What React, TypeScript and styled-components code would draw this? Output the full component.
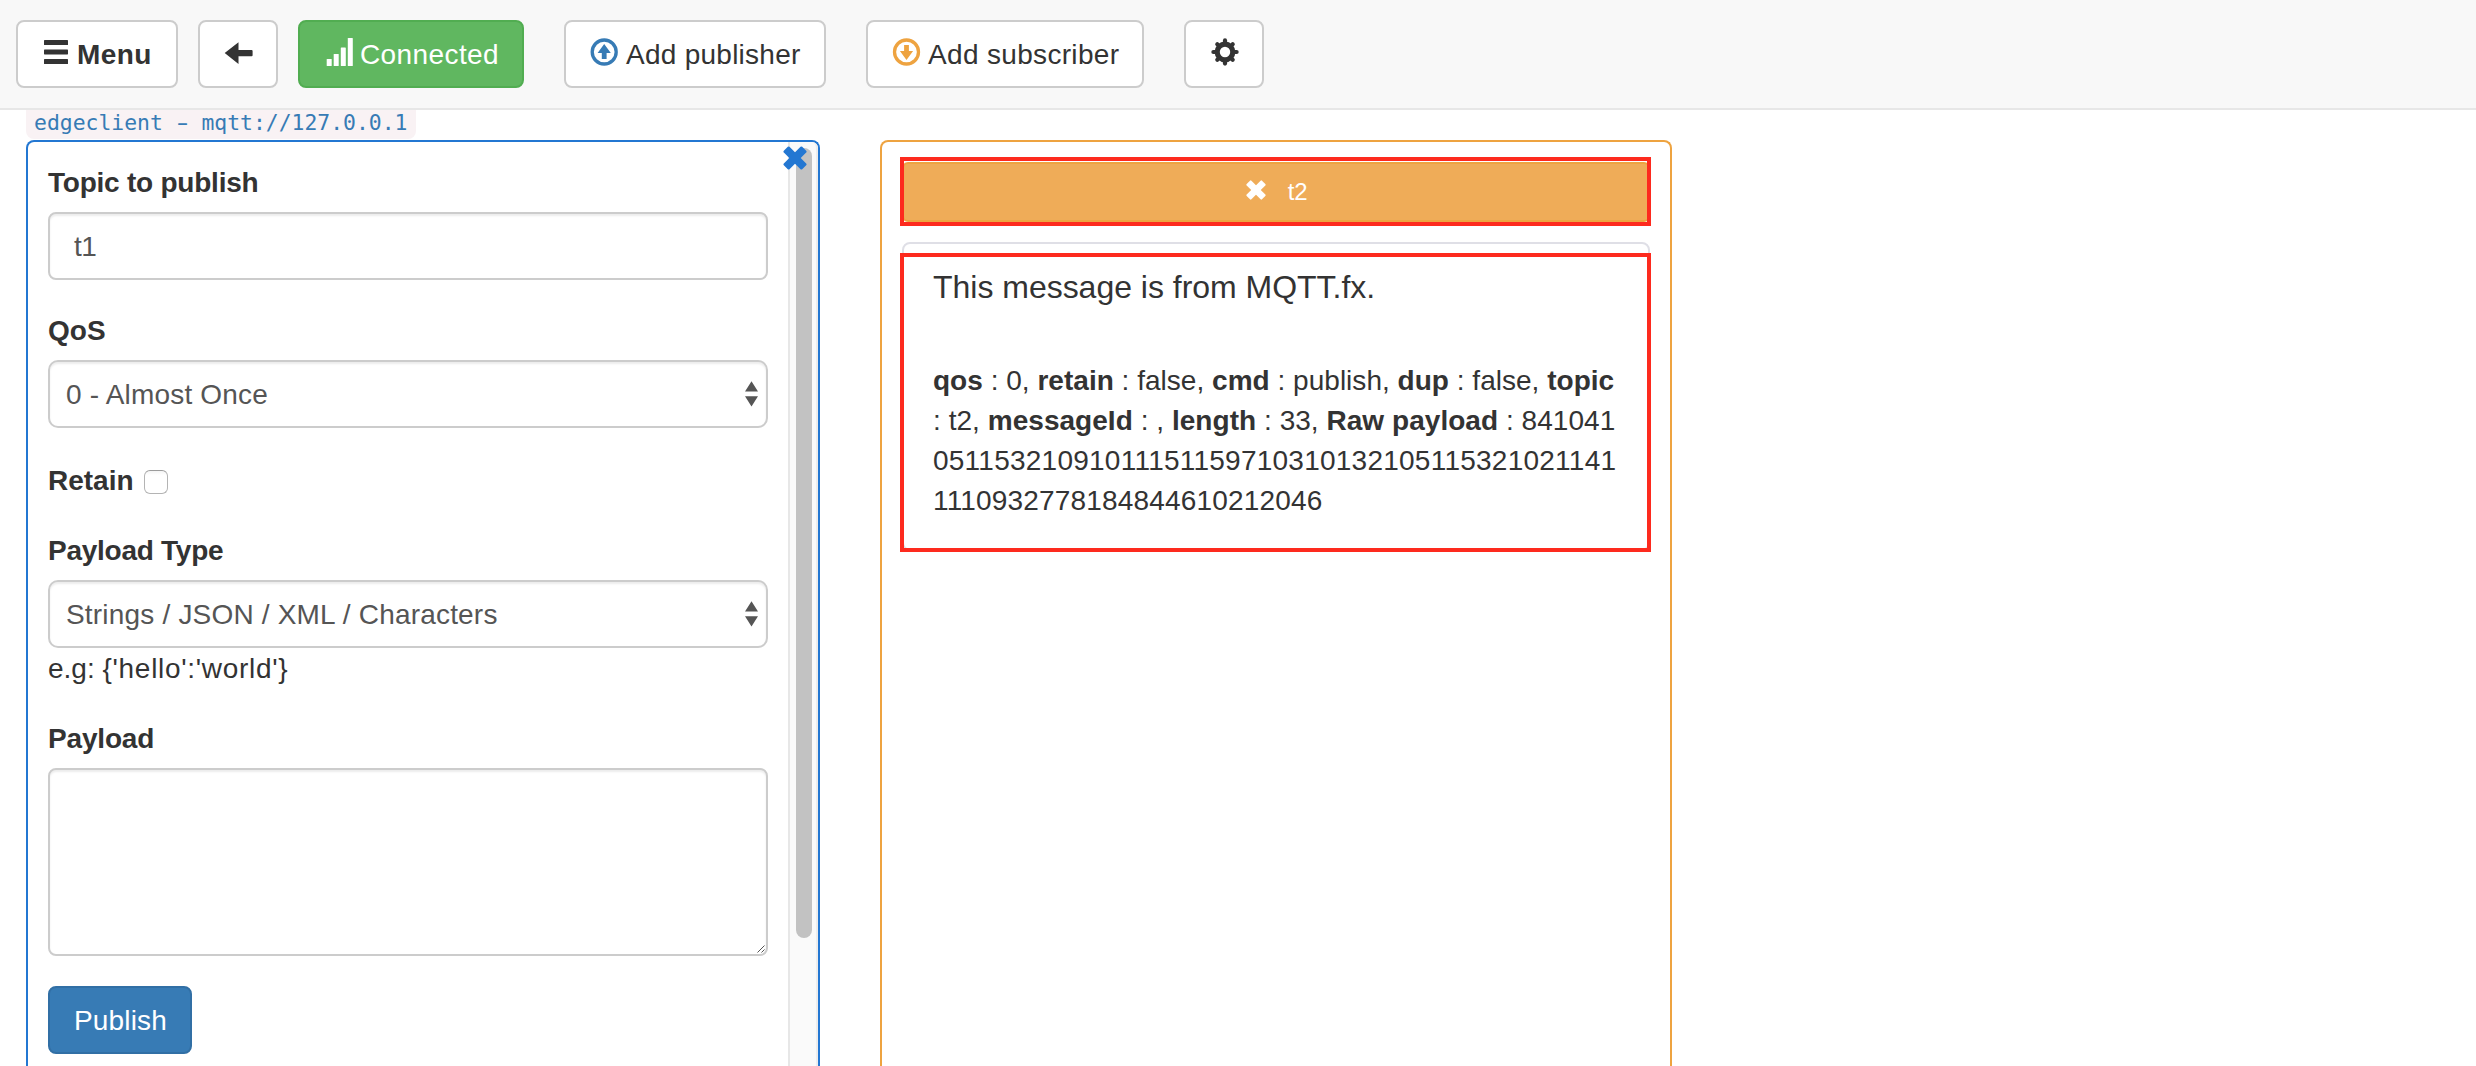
import React from "react";
import styled, { createGlobalStyle } from "styled-components";

const GlobalStyle = createGlobalStyle`
  *, *::before, *::after { box-sizing: border-box; }
  body {
    margin: 0;
    overflow: hidden;
    background: #fff;
    color: #333;
    font: 28px/40px "Helvetica Neue", "Liberation Sans", Arial, sans-serif;
  }
`;

const Page = styled.div`
  display: flex;
  flex-direction: column;
  width: 2476px;
  height: 1066px;
  overflow: hidden;
`;

/* ---------- toolbar ---------- */

const Navbar = styled.header`
  flex: none;
  display: flex;
  align-items: flex-start;
  height: 110px;
  padding: 20px 16px 0;
  background: #f8f8f8;
  border-bottom: 2px solid #e7e7e7;
`;

const ButtonGroup = styled.div`
  display: flex;
  gap: 20px;
  margin-right: 40px;
`;

type Tone = "default" | "success" | "primary";
const tones: Record<Tone, [string, string, string]> = {
  default: ["#fff", "#ccc", "#333"],
  success: ["#60b760", "#51ad51", "#fff"],
  primary: ["#377bb5", "#316fa5", "#fff"],
};

const Button = styled.button<{ $width: number; $tone?: Tone; $bold?: boolean; $track?: number }>`
  display: flex;
  flex: none;
  width: ${(p) => p.$width}px;
  height: 68px;
  margin: 0;
  padding: 13px 24px 11px;
  border: 2px solid ${(p) => tones[p.$tone ?? "default"][1]};
  border-radius: 8px;
  background: ${(p) => tones[p.$tone ?? "default"][0]};
  color: ${(p) => tones[p.$tone ?? "default"][2]};
  font: inherit;
  font-weight: ${(p) => (p.$bold ? 700 : 400)};
  letter-spacing: ${(p) => p.$track ?? 0}px;
  white-space: nowrap;
`;

const Icon = styled.svg<{ $color?: string; $gap?: number }>`
  flex: none;
  width: 28px;
  height: 28px;
  margin: 3px ${(p) => p.$gap ?? 8}px 0 0;
  overflow: visible;
  fill: currentColor;
  color: ${(p) => p.$color ?? "inherit"};
`;

const MenuIcon = () => (
  <Icon viewBox="0 0 28 28" $gap={7}>
    <rect x="2" y="2" width="24" height="5" rx=".6" />
    <rect x="2" y="11.6" width="24" height="4.8" rx=".6" />
    <rect x="2" y="21" width="24" height="5" rx=".6" />
  </Icon>
);

const BackIcon = () => (
  <Icon viewBox="0 0 28 28" $gap={0}>
    <path d="M.7 15 L14.5 4.2 V12 H27.6 Q28.6 12 28.6 13 V17.3 Q28.6 18.2 27.6 18.2 H14.5 V26 Z" />
  </Icon>
);

const SignalIcon = () => (
  <Icon viewBox="0 0 28 28">
    <rect x="2.7" y="21" width="5" height="7" rx=".6" />
    <rect x="9.7" y="16" width="5" height="12" rx=".6" />
    <rect x="16.8" y="9.5" width="5" height="18.5" rx=".6" />
    <rect x="23.8" y="0" width="5" height="28" rx=".6" />
  </Icon>
);

const CircleArrow = ({ color, down }: { color: string; down?: boolean }) => (
  <Icon viewBox="0 0 28 28" $color={color}>
    <g transform={down ? "translate(.3 0)" : "matrix(1 0 0 -1 0 28)"}>
      <circle cx="14.2" cy="14" r="12" fill="none" stroke="currentColor" strokeWidth="3.3" />
      <path d="M11.8 7 h4.8 v6 h4.2 L14.2 22 L7.6 13 h4.2 z" />
    </g>
  </Icon>
);

const GearIcon = () => (
  <Icon viewBox="0 0 28 28" $gap={0}>
    <g transform="translate(15 14)" fill="none" stroke="currentColor">
      <circle r="7.8" strokeWidth="5.2" />
      {[0, 45, 90, 135, 180, 225, 270, 315].map((a) => (
        <path key={a} transform={`rotate(${a})`} d={a % 90 ? "M0 -9 V-10.9" : "M0 -9 V-11.6"} strokeWidth="4.2" strokeLinecap="round" />
      ))}
    </g>
  </Icon>
);

/* ---------- connection line ---------- */

const ConnectionRow = styled.div`
  flex: none;
  height: 30px;
  padding-left: 26px;
`;

const ConnectionTag = styled.code`
  display: block;
  width: 390px;
  height: 29px;
  padding-left: 8px;
  border-radius: 0 0 8px 8px;
  background: #f9f2f4;
  color: #377bb5;
  font: 21.4px/25px "DejaVu Sans Mono", monospace;
  white-space: pre;
`;

const Dash = styled.span`
  display: inline-block;
  transform: scaleX(1.6);
`;

/* ---------- panels ---------- */

const Board = styled.main`
  flex: 1;
  display: flex;
  gap: 60px;
  min-height: 0;
  padding-left: 26px;
`;

const Panel = styled.section<{ $width: number; $color: string }>`
  position: relative;
  display: flex;
  flex: none;
  width: ${(p) => p.$width}px;
  border: 2px solid ${(p) => p.$color};
  border-bottom: 0;
  border-radius: 8px 8px 0 0;
`;

const Form = styled.form`
  flex: 1;
  padding: 20px 20px 0;
`;

const Field = styled.div`
  margin-bottom: 30px;
`;

const Label = styled.label<{ $track?: number }>`
  display: block;
  padding-top: 1px;
  margin-bottom: 9px;
  font-weight: 700;
  letter-spacing: ${(p) => p.$track ?? 0}px;
`;

const TextInput = styled.input`
  display: block;
  width: 100%;
  height: 68px;
  padding: 13px 24px 11px;
  border: 2px solid #ccc;
  border-radius: 8px;
  outline: 0;
  box-shadow: inset 0 2px 2px rgba(0, 0, 0, 0.075);
  background: #fff;
  color: #555;
  font: inherit;
  letter-spacing: -0.6px;
`;

const SelectBox = styled.div`
  display: grid;
  align-items: center;
`;

const Select = styled.select`
  grid-area: 1 / 1;
  width: 100%;
  height: 68px;
  padding: 13px 16px 11px;
  border: 2px solid #ccc;
  border-radius: 10px;
  outline: 0;
  appearance: none;
  box-shadow: inset 0 2px 2px rgba(0, 0, 0, 0.075);
  background: #fff;
  color: #555;
  font: inherit;
  letter-spacing: 0.19px;
`;

const Stepper = styled.svg`
  grid-area: 1 / 1;
  justify-self: end;
  width: 13px;
  height: 26px;
  margin-right: 10px;
  fill: #555;
  pointer-events: none;
`;

const StepArrows = () => (
  <Stepper viewBox="0 0 13 26">
    <path d="M0 10.6 L6.5 .3 L13 10.6 Z M0 15.3 H13 L6.5 25.6 Z" />
  </Stepper>
);

const CheckRow = styled.label`
  display: flex;
  align-items: flex-start;
  height: 40px;
  padding-top: 1px;
  margin: 32px 0 30px;
  font-weight: 700;
`;

const Checkbox = styled.input`
  width: 24px;
  height: 24px;
  margin: 9px 0 0 10px;
  border: 1.5px solid #b4b4b4;
  border-top-color: #9c9c9c;
  border-radius: 6px;
  appearance: none;
  background: linear-gradient(#f4f4f4, #fff 4px);
`;

const Hint = styled.div`
  height: 40px;
  padding-top: 1px;
`;

const Sample = styled.span`
  letter-spacing: 0.7px;
`;

const TextAreaBox = styled.div`
  display: grid;
`;

const TextArea = styled.textarea`
  grid-area: 1 / 1;
  width: 100%;
  height: 188px;
  padding: 12px 24px;
  border: 2px solid #ccc;
  border-radius: 8px;
  outline: 0;
  resize: none;
  box-shadow: inset 0 2px 2px rgba(0, 0, 0, 0.075);
  background: #fff;
  color: #555;
  font: inherit;
`;

const Grip = styled.svg`
  grid-area: 1 / 1;
  place-self: end;
  width: 8px;
  height: 8px;
  margin: 0 3px 3px 0;
  overflow: visible;
  stroke: #555;
  stroke-width: 1;
  pointer-events: none;
`;

const ScrollTrack = styled.div`
  flex: none;
  width: 30px;
  padding: 6px 4px 0 6px;
  border-left: 2px solid #e7e7e7;
  border-right: 2px solid #ededed;
  border-top-right-radius: 6px;
  background: #fafafa;
`;

const ScrollThumb = styled.div`
  width: 16px;
  height: 790px;
  border-radius: 8px;
  background: #c2c2c2;
`;

const ClosePin = styled.div`
  position: absolute;
  top: 4px;
  right: 11px;
  display: flex;
`;

const CrossSvg = styled.svg<{ $size: number; $color: string }>`
  flex: none;
  width: ${(p) => p.$size}px;
  height: ${(p) => p.$size}px;
  fill: ${(p) => p.$color};
`;

const Cross = ({ size, color }: { size: number; color: string }) => (
  <CrossSvg viewBox="0 0 24 24" $size={size} $color={color}>
    <g transform="translate(12 12) rotate(45)">
      <rect x="-13" y="-4" width="26" height="8" rx="1.2" />
      <rect x="-4" y="-13" width="8" height="26" rx="1.2" />
    </g>
  </CrossSvg>
);

/* ---------- subscriber ---------- */

const Feed = styled.div`
  flex: 1;
  display: flex;
  flex-direction: column;
  padding: 20px 20px 0;
`;

const Marked = styled.div`
  position: relative;
`;

/* red annotation frame drawn over a block */
const Highlight = styled.div<{ $top: number; $height: number }>`
  position: absolute;
  left: -2px;
  top: ${(p) => p.$top}px;
  width: 751px;
  height: ${(p) => p.$height}px;
  border: 4px solid #fd2a1e;
`;

const TopicButton = styled.button`
  display: flex;
  align-items: flex-start;
  justify-content: center;
  width: 100%;
  height: 60px;
  margin: 0;
  padding: 16px 0 0 1px;
  border: 2px solid #eea340;
  border-radius: 6px;
  background: #efac58;
  color: #fff;
  font: inherit;
`;

const TopicName = styled.span`
  margin: 0 0 0 22px;
  font-size: 24px;
  line-height: 24px;
  letter-spacing: -0.3px;
`;

const Message = styled.article`
  height: 309px;
  margin-top: 20px;
  padding: 23px 20px 0 29px;
  border: 2px solid #dfdfe6;
  border-radius: 8px;
`;

const MessageText = styled.p`
  margin: 0 0 54px;
  font-size: 32px;
  letter-spacing: -0.02px;
`;

const Meta = styled.p<{ $track?: number }>`
  margin: 0;
  letter-spacing: ${(p) => p.$track ?? 0}px;
  white-space: nowrap;
`;

const BLUE = "#2377d2";
const ORANGE = "#eea340";

export default function App() {
  return (
    <>
      <GlobalStyle />
      <Page>
        <Navbar>
          <ButtonGroup>
            <Button $width={162} $bold $track={0.4}><MenuIcon />Menu</Button>
            <Button $width={80}><BackIcon /></Button>
            <Button $width={226} $tone="success" $track={0.4}><SignalIcon />Connected</Button>
          </ButtonGroup>
          <ButtonGroup>
            <Button $width={262} $track={0.26}><CircleArrow color="#377bb5" />Add publisher</Button>
          </ButtonGroup>
          <ButtonGroup>
            <Button $width={278} $track={0.33}><CircleArrow color={ORANGE} down />Add subscriber</Button>
          </ButtonGroup>
          <Button $width={80}><GearIcon /></Button>
        </Navbar>

        <ConnectionRow>
          <ConnectionTag>edgeclient <Dash>-</Dash> mqtt://127.0.0.1</ConnectionTag>
        </ConnectionRow>

        <Board>
          <Panel $width={794} $color={BLUE}>
            <Form onSubmit={(e) => e.preventDefault()}>
              <Field>
                <Label $track={-0.23}>Topic to publish</Label>
                <TextInput defaultValue="t1" />
              </Field>
              <Field>
                <Label>QoS</Label>
                <SelectBox>
                  <Select><option>0 - Almost Once</option></Select>
                  <StepArrows />
                </SelectBox>
              </Field>
              <CheckRow>Retain<Checkbox type="checkbox" /></CheckRow>
              <Field>
                <Label $track={-0.26}>Payload Type</Label>
                <SelectBox>
                  <Select><option>Strings / JSON / XML / Characters</option></Select>
                  <StepArrows />
                </SelectBox>
                <Hint>e.g: <Sample>{"{'hello':'world'}"}</Sample></Hint>
              </Field>
              <Field>
                <Label $track={-0.17}>Payload</Label>
                <TextAreaBox>
                  <TextArea />
                  <Grip viewBox="0 0 8 8"><path d="M.5 7.5 L7.5 .5 M4.5 7.5 L7.5 4.5" /></Grip>
                </TextAreaBox>
              </Field>
              <Button $width={144} $tone="primary" $track={0.15}>Publish</Button>
            </Form>
            <ScrollTrack><ScrollThumb /></ScrollTrack>
            <ClosePin><Cross size={24} color={BLUE} /></ClosePin>
          </Panel>

          <Panel $width={792} $color={ORANGE}>
            <Feed>
              <Marked>
                <TopicButton>
                  <Cross size={20} color="#fff" />
                  <TopicName>t2</TopicName>
                </TopicButton>
                <Highlight $top={-5} $height={69} />
              </Marked>
              <Marked>
                <Message>
                  <MessageText>This message is from MQTT.fx.</MessageText>
                  <Meta $track={0.02}>
                    <b>qos</b> : 0, <b>retain</b> : false, <b>cmd</b> : publish, <b>dup</b> : false, <b>topic</b>
                  </Meta>
                  <Meta $track={0.04}>
                    : t2, <b>messageId</b> : , <b>length</b> : 33, <b>Raw payload</b> : 841041
                  </Meta>
                  <Meta $track={0.24}>05115321091011151159710310132105115321021141</Meta>
                  <Meta $track={0.17}>1110932778184844610212046</Meta>
                </Message>
                <Highlight $top={31} $height={299} />
              </Marked>
            </Feed>
          </Panel>
        </Board>
      </Page>
    </>
  );
}
